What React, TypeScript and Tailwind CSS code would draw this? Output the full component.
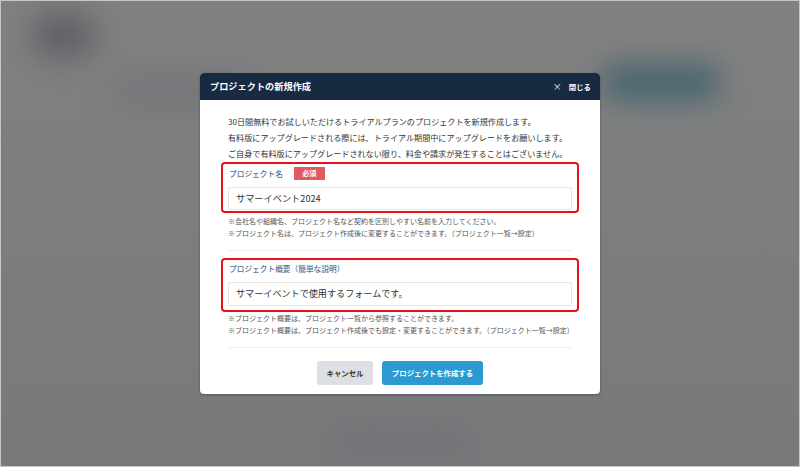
import React from "react";

const font = { fontFamily: '"Noto Sans CJK JP", "Noto Sans", sans-serif' };

export default function App() {
  return (
    <div
      className="relative w-[800px] h-[467px] overflow-hidden border border-[#c6c6c6] bg-gradient-to-b from-[#818181] to-[#78797b]"
      style={font}
    >
      {/* blurred page behind the dialog */}
      <div className="absolute left-[30px] top-[12px] w-[64px] h-[44px] rounded-full bg-[#5c5e63] blur-[16px]" />
      <div className="absolute left-[110px] top-[70px] w-[140px] h-[40px] rounded-full bg-[#76777a] blur-[14px]" />
      <div className="absolute left-[600px] top-[62px] w-[120px] h-[38px] rounded-full bg-[#4a6670] blur-[14px]" />
      <div className="absolute left-[330px] top-[425px] w-[140px] h-[30px] rounded-full bg-[#727376] blur-[14px]" />

      <div className="relative flex h-full w-full items-center justify-center">
        <div className="flex w-[400px] flex-col overflow-hidden rounded-[4px] bg-white shadow-[0_1px_3px_rgba(0,0,0,0.3)]">
          {/* header */}
          <div className="flex h-[27px] items-center justify-between bg-[#172a41] pl-[10px] pr-[9px]">
            <span className="text-[9.2px] font-bold leading-none text-white">プロジェクトの新規作成</span>
            <span className="flex items-center gap-[7px] text-white">
              <span className="text-[9px] leading-none">×</span>
              <span className="text-[7.4px] font-bold leading-none">閉じる</span>
            </span>
          </div>

          {/* body */}
          <div className="flex flex-col px-[28px] pt-[14px] pb-[9px]">
            <div className="text-[8.1px] leading-[16px] text-[#333]">
              <p>30日間無料でお試しいただけるトライアルプランのプロジェクトを新規作成します。</p>
              <p>有料版にアップグレードされる際には、トライアル期間中にアップグレードをお願いします。</p>
              <p>ご自身で有料版にアップグレードされない限り、料金や請求が発生することはございません。</p>
            </div>

            {/* field 1 */}
            <div className="mx-[-7px] flex flex-col rounded-[4px] border-2 border-[#e8101a] px-[5px] pt-[3px] pb-[1px]">
              <div className="flex h-[13px] items-center gap-[11px] pl-[1px]">
                <span className="text-[7.7px] font-medium leading-none text-[#5a7393]">プロジェクト名</span>
                <span className="flex h-[13px] w-[31px] items-center justify-center bg-[#e25a5e] text-[7.2px] font-bold leading-none text-white">
                  必須
                </span>
              </div>
              <div className="mt-[7px] flex h-[23px] items-center rounded-[2px] border border-[#e4e4e4] px-[7px] text-[9.2px] text-[#333]">
                サマーイベント2024
              </div>
            </div>
            <div className="mt-[2px] text-[7px] leading-[12px] text-[#555]">
              <p>※会社名や組織名、プロジェクト名など契約を区別しやすい名前を入力してください。</p>
              <p>※プロジェクト名は、プロジェクト作成後に変更することができます。（プロジェクト一覧→設定）</p>
            </div>

            <div className="mt-[11px] h-px bg-[#eeeeee]" />

            {/* field 2 */}
            <div className="mx-[-7px] mt-[7px] flex flex-col rounded-[4px] border-2 border-[#e8101a] px-[5px] pt-[3px] pb-[4px]">
              <div className="flex h-[12px] items-center pl-[1px]">
                <span className="text-[7.7px] font-medium leading-none text-[#5a7393]">プロジェクト概要（簡単な説明）</span>
              </div>
              <div className="mt-[7px] flex h-[24px] items-center rounded-[2px] border border-[#e4e4e4] px-[7px] text-[9.1px] text-[#333]">
                サマーイベントで使用するフォームです。
              </div>
            </div>
            <div className="text-[7px] leading-[12px] text-[#555]">
              <p>※プロジェクト概要は、プロジェクト一覧から参照することができます。</p>
              <p>※プロジェクト概要は、プロジェクト作成後でも設定・変更することができます。（プロジェクト一覧→設定）</p>
            </div>

            <div className="mt-[11px] h-px bg-[#eeeeee]" />

            {/* buttons */}
            <div className="mt-[13px] flex justify-center gap-[9px]">
              <button className="flex h-[24px] w-[56px] items-center justify-center rounded-[3px] bg-[#dcdfe3] text-[7.4px] font-bold text-[#333]">
                キャンセル
              </button>
              <button className="flex h-[24px] w-[101px] items-center justify-center rounded-[3px] bg-[#2a9ad0] text-[7.4px] font-bold text-white">
                プロジェクトを作成する
              </button>
            </div>
          </div>
        </div>
      </div>
    </div>
  );
}
